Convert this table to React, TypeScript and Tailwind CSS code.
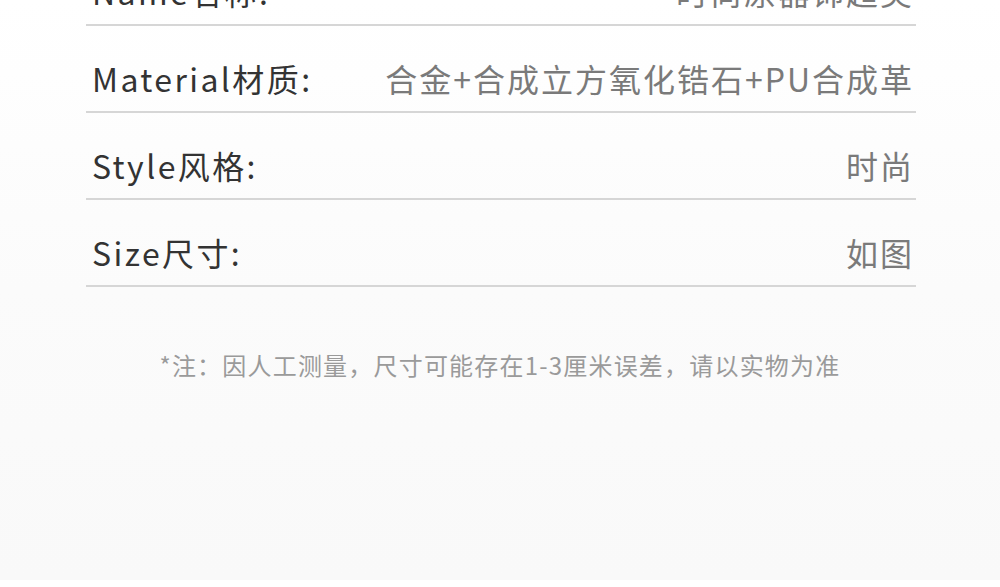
const rows = [
  { label: "Name名称:", value: "时尚原器饰超美" },
  { label: "Material材质:", value: "合金+合成立方氧化锆石+PU合成革" },
  { label: "Style风格:", value: "时尚" },
  { label: "Size尺寸:", value: "如图" },
]

export default function App() {
  return (
    <div
      className="w-[1000px] h-[587px] overflow-hidden flex flex-col"
      style={{ fontFamily: '"Noto Sans CJK SC", "Noto Sans", sans-serif' }}
    >
      <div className="flex-1 bg-gradient-to-b from-white via-[#fbfbfb] to-[#f9f9f9] flex flex-col">
        <div className="ml-[86px] mr-[84px] -mt-[61px] flex flex-col">
          {rows.map((r) => (
            <div
              key={r.label}
              className="h-[87px] border-b-2 border-[#d6d6d6] flex items-start justify-between pt-[28px] pl-[6px] pr-[2px]"
            >
              <span className="text-[32px] leading-[48px] tracking-[2.4px] text-[#333333]">{r.label}</span>
              <span className="text-[32px] leading-[48px] tracking-[2px] text-[#7a7a7a]">{r.value}</span>
            </div>
          ))}
        </div>
        <p className="mt-[60px] text-center text-[24px] leading-[36px] tracking-[1.2px] text-[#9a9a9a]">
          *注：因人工测量，尺寸可能存在1-3厘米误差，请以实物为准
        </p>
      </div>
      <div className="h-[7px] bg-white" />
    </div>
  )
}
